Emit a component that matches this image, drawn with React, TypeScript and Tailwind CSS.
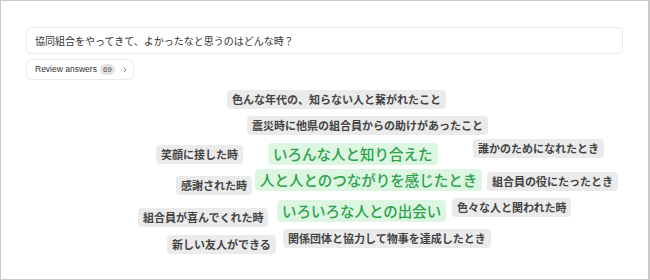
import { ChevronRight } from "lucide-react";

type Tag = { text: string; x: number; y: number; hot?: boolean };

// word cloud positions (canvas coords, origin at top-left of the cloud area)
const tags: Tag[] = [
  { text: "色んな年代の、知らない人と繋がれたこと", x: 226, y: 5 },
  { text: "震災時に他県の組合員からの助けがあったこと", x: 246, y: 31 },
  { text: "笑顔に接した時", x: 155, y: 60 },
  { text: "いろんな人と知り合えた", x: 267, y: 58, hot: true },
  { text: "誰かのためになれたとき", x: 472, y: 54 },
  { text: "感謝された時", x: 175, y: 91 },
  { text: "人と人とのつながりを感じたとき", x: 254, y: 84, hot: true },
  { text: "組合員の役にたったとき", x: 486, y: 87 },
  { text: "組合員が喜んでくれた時", x: 137, y: 123 },
  { text: "いろいろな人との出会い", x: 276, y: 115, hot: true },
  { text: "色々な人と関われた時", x: 451, y: 113 },
  { text: "新しい友人ができる", x: 166, y: 150 },
  { text: "関係団体と協力して物事を達成したとき", x: 282, y: 144 },
];

const jp = "font-['Noto_Sans_CJK_JP','Noto_Sans',sans-serif]";

export default function App() {
  return (
    <div className={`flex h-[280px] w-[650px] flex-col border border-r-2 border-[#c9c9c9] bg-white px-[25px] pt-[26px] ${jp}`}>
      {/* 質問 */}
      <div className="flex h-[27px] items-center rounded-[5px] border border-[#ebebeb] px-[8px] text-[10px] text-[#333]">
        協同組合をやってきて、よかったなと思うのはどんな時？
      </div>

      {/* Review */}
      <button
        type="button"
        className="mt-[5px] flex h-[21px] w-[108px] shrink-0 items-center self-start whitespace-nowrap rounded-[5px] border border-[#ebebeb] pl-[8px] font-['Liberation_Sans',sans-serif] text-[8.5px] text-[#333]"
      >
        <span>Review answers</span>
        <span className="ml-[3px] flex h-[11px] items-center rounded-full bg-[#e3e3e3] px-[3px] text-[8px] text-[#555]">69</span>
        <ChevronRight className="ml-[6px] h-[8px] w-[8px] text-[#555]" strokeWidth={2} />
      </button>

      {/* Cloud */}
      <div className="relative -mx-[25px] mt-[5px] flex-1">
        {tags.map((t) => (
          <span
            key={t.text}
            style={{ left: t.x, top: t.y }}
            className={
              t.hot
                ? "absolute flex h-[22px] items-center whitespace-nowrap rounded-[4px] bg-[#dcf6e1] px-[5px] text-[14.5px] font-medium text-[#2ba24c]"
                : "absolute flex h-[19px] items-center whitespace-nowrap rounded-[4px] bg-[#ebebeb] px-[5px] text-[11px] font-bold text-[#444]"
            }
          >
            {t.text}
          </span>
        ))}
      </div>
    </div>
  );
}
